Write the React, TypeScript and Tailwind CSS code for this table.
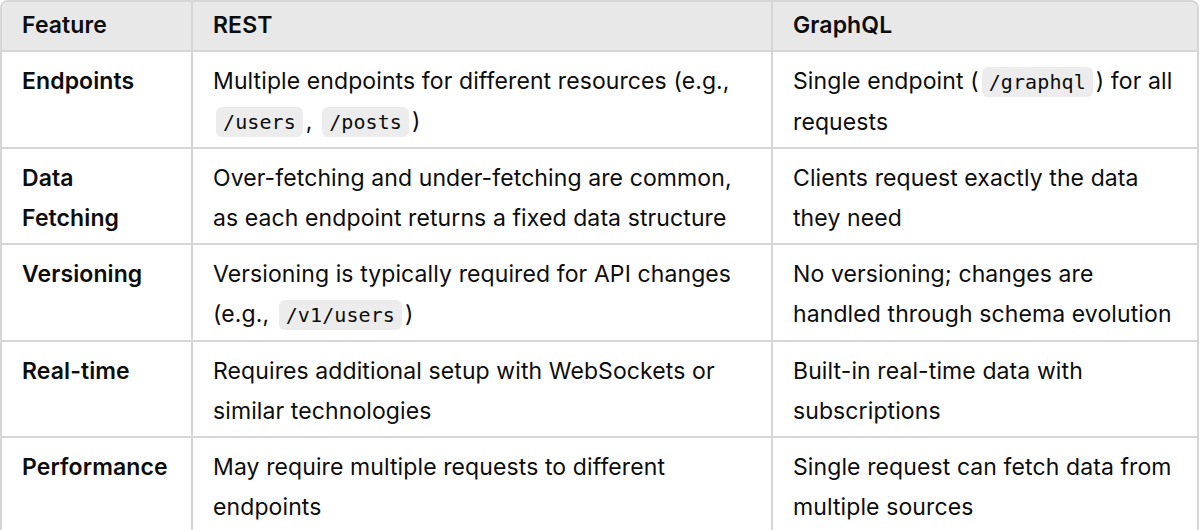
import React from 'react';

type Cell = React.ReactNode;

const Code = ({ children }: { children: React.ReactNode }) => (
    <code className="mx-[3px] rounded-md bg-[#ececec] px-[7px] py-[3px] font-['DejaVu_Sans_Mono',monospace] text-[20px]">
        {children}
    </code>
);

const rows: { feature: Cell; rest: Cell; graphql: Cell }[] = [
    {
        feature: 'Endpoints',
        rest: <>Multiple endpoints for different resources (e.g., <Code>/users</Code>, <Code>/posts</Code>)</>,
        graphql: <>Single endpoint (<Code>/graphql</Code>) for all requests</>,
    },
    {
        feature: 'Data Fetching',
        rest: 'Over-fetching and under-fetching are common, as each endpoint returns a fixed data structure',
        graphql: 'Clients request exactly the data they need',
    },
    {
        feature: 'Versioning',
        rest: <>Versioning is typically required for API changes (e.g., <Code>/v1/users</Code>)</>,
        graphql: 'No versioning; changes are handled through schema evolution',
    },
    {
        feature: 'Real-time',
        rest: 'Requires additional setup with WebSockets or similar technologies',
        graphql: 'Built-in real-time data with subscriptions',
    },
    {
        feature: 'Performance',
        rest: 'May require multiple requests to different endpoints',
        graphql: 'Single request can fetch data from multiple sources',
    },
];

export default function App() {
    return (
        <div className="h-[530px] w-[1200px] overflow-hidden bg-white font-['Inter',sans-serif] text-[23px] leading-[40px] tracking-[0.1px] text-[#0d0d0d]">
            <div className="w-[1199px] overflow-hidden rounded-t-lg border-2 border-b-0 border-[#d6d6d6]">
                <div className="grid grid-cols-[191px_580px_1fr] bg-[#e8e8e8] font-semibold">
                    <div className="border-b-2 border-r-2 border-[#d6d6d6] px-[20px] pt-[3px] pb-[5px]">Feature</div>
                    <div className="border-b-2 border-r-2 border-[#d6d6d6] px-[20px] pt-[3px] pb-[5px]">REST</div>
                    <div className="border-b-2 border-[#d6d6d6] px-[20px] pt-[3px] pb-[5px]">GraphQL</div>
                </div>
                {rows.map((r, i) => (
                    <div key={i} className="grid grid-cols-[191px_580px_1fr]">
                        <div className="border-b-2 border-r-2 border-[#d6d6d6] px-[20px] pt-[9px] pb-[5px] font-semibold">{r.feature}</div>
                        <div className="border-b-2 border-r-2 border-[#d6d6d6] px-[20px] pt-[9px] pb-[5px]">{r.rest}</div>
                        <div className="border-b-2 border-[#d6d6d6] px-[20px] pt-[9px] pb-[5px]">{r.graphql}</div>
                    </div>
                ))}
            </div>
        </div>
    );
}
